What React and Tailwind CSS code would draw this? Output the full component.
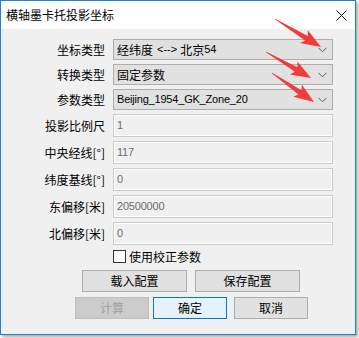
import React from "react";

const CJK = { fontFamily: '"Noto Sans CJK SC", "Liberation Sans", sans-serif' };
const LAT = { fontFamily: '"Liberation Sans", "Noto Sans CJK SC", sans-serif' };

function Chevron() {
  return (
    <svg width="9" height="6" viewBox="0 0 9 6" className="absolute right-[5px] top-1/2 -translate-y-1/2">
      <polyline points="0.5,0.8 4.5,4.8 8.5,0.8" fill="none" stroke="#5a5a5a" strokeWidth="1" />
    </svg>
  );
}

function Combo({ children }) {
  return (
    <div className="relative w-[220px] h-[21px] bg-[#e1e1e1] border border-[#adadad] flex items-center pl-[3px] text-[12px] text-black">
      {children}
      <Chevron />
    </div>
  );
}

function Field({ value }) {
  return (
    <div
      className="w-[220px] h-[23px] bg-[#f0f0f0] border border-[#cccccc] shadow-[inset_0_0_0_1px_#ffffff] flex items-center pl-[3px] text-[11px] text-[#6d6d6d] tracking-[-0.2px]"
      style={LAT}
    >
      {value}
    </div>
  );
}

function Row({ label, children }) {
  return (
    <div className="flex items-center">
      <div className="w-[104px] text-right text-[12px] text-black leading-none" style={CJK}>
        {label}
      </div>
      <div className="ml-[8px]">{children}</div>
    </div>
  );
}

function Arrow({ t, p }) {
  const dx = p[0] - t[0];
  const dy = p[1] - t[1];
  const L = Math.hypot(dx, dy);
  const ux = dx / L, uy = dy / L;
  const nx = -uy, ny = ux;
  const hl = 17;
  const bx = p[0] - ux * hl, by = p[1] - uy * hl;
  const bbx = p[0] - ux * (hl + 3), bby = p[1] - uy * (hl + 3);
  const pts = [
    [t[0] + nx * 0.4, t[1] + ny * 0.4],
    [bx + nx * 2.6, by + ny * 2.6],
    [bbx + nx * 7.5, bby + ny * 7.5],
    [p[0], p[1]],
    [bbx - nx * 7.5, bby - ny * 7.5],
    [bx - nx * 2.6, by - ny * 2.6],
    [t[0] - nx * 0.4, t[1] - ny * 0.4],
  ];
  return <polygon points={pts.map((q) => q.join(",")).join(" ")} fill="#f33b3b" />;
}

function Btn({ children, w, variant }) {
  let cls = "bg-[#e1e1e1] border-[#adadad] text-black";
  if (variant === "disabled") cls = "bg-[#cccccc] border-[#bfbfbf] text-[#a0a0a0]";
  if (variant === "default") cls = "bg-[#e5f1fb] border-[#0078d7] text-black";
  return (
    <div
      className={`h-[22px] border flex items-center justify-center text-[12px] ${cls} ${w}`}
      style={CJK}
    >
      {children}
    </div>
  );
}

export default function App() {
  return (
    <div className="relative w-[359px] h-[338px] bg-white overflow-hidden">
      <div className="w-[356px] h-[335px] border border-[#1883d7] bg-[#f0f0f0] flex flex-col shadow-[2px_2px_3px_rgba(0,0,0,0.35)]">
        <div className="h-[28px] bg-white flex items-center pl-[5px] relative shrink-0">
          <span className="text-[12px] text-black leading-none" style={CJK}>
            横轴墨卡托投影坐标
          </span>
          <svg width="11" height="11" viewBox="0 0 11 11" className="absolute left-[335px] top-[9px]">
            <line x1="0.5" y1="0.5" x2="10.5" y2="10.5" stroke="#111" strokeWidth="1" />
            <line x1="10.5" y1="0.5" x2="0.5" y2="10.5" stroke="#111" strokeWidth="1" />
          </svg>
        </div>
        <div className="flex flex-col pt-[10px]">
          <div className="flex flex-col gap-[4px]">
            <Row label="坐标类型">
              <Combo>
                <span style={CJK}>经纬度</span>
                <span style={LAT} className="text-[11px] ml-[4px]">&lt;--&gt;</span>
                <span style={CJK} className="ml-[3px]">北京</span>
                <span style={LAT} className="text-[11px]">54</span>
              </Combo>
            </Row>
            <Row label="转换类型">
              <Combo>
                <span style={CJK}>固定参数</span>
              </Combo>
            </Row>
            <Row label="参数类型">
              <Combo>
                <span style={LAT} className="text-[11px] tracking-[-0.2px]">Beijing_1954_GK_Zone_20</span>
              </Combo>
            </Row>
            <Row label="投影比例尺">
              <Field value="1" />
            </Row>
            <Row label="中央经线[°]">
              <Field value="117" />
            </Row>
            <Row label="纬度基线[°]">
              <Field value="0" />
            </Row>
            <Row label="东偏移[米]">
              <Field value="20500000" />
            </Row>
            <Row label="北偏移[米]">
              <Field value="0" />
            </Row>
          </div>
          <div className="flex items-center mt-[5px] h-[13px] pl-[112px]">
            <div className="w-[13px] h-[13px] border border-[#333333] bg-white" />
            <span className="ml-[3px] text-[12px] text-black leading-none" style={CJK}>
              使用校正参数
            </span>
          </div>
          <div className="flex mt-[7px] pl-[81px] gap-[8px]">
            <Btn w="w-[105px]">载入配置</Btn>
            <Btn w="w-[105px]">保存配置</Btn>
          </div>
          <div className="flex mt-[5px] pl-[74px]">
            <Btn w="w-[74px]" variant="disabled">计算</Btn>
            <div className="ml-[4px]">
              <Btn w="w-[74px]" variant="default">确定</Btn>
            </div>
            <div className="ml-[7px]">
              <Btn w="w-[74px]">取消</Btn>
            </div>
          </div>
        </div>
      </div>
      <svg width="359" height="338" className="absolute left-0 top-0 pointer-events-none">
        <Arrow t={[275, 19]} p={[321, 47]} />
        <Arrow t={[266, 52]} p={[311, 78]} />
        <Arrow t={[272, 73]} p={[314, 102]} />
      </svg>
    </div>
  );
}
